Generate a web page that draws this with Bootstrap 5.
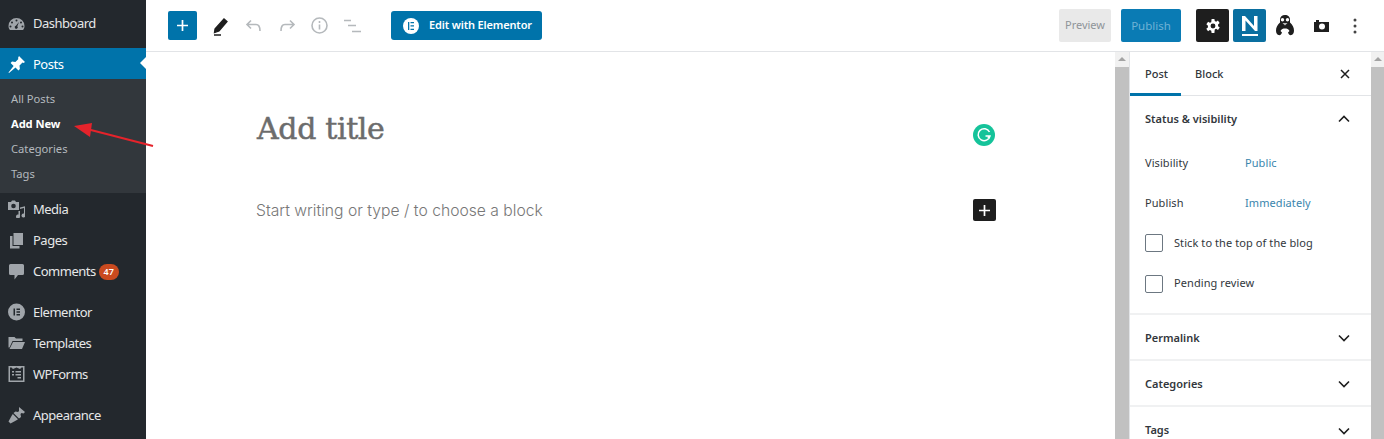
<!doctype html>
<html lang="en"><head><meta charset="utf-8"><title>Add New Post</title>
<link href="https://cdn.jsdelivr.net/npm/bootstrap@5.3.0/dist/css/bootstrap.min.css" rel="stylesheet">
<style>
html,body{height:439px;overflow:hidden;background:#fff}
body{font-family:"Noto Sans","Open Sans",sans-serif;font-size:11px;color:#23282d}
.wp-app{height:439px;position:relative;overflow:hidden}
.wp-side{width:146px;background:#23282d;flex:none;color:#e6e7e8;font-size:13px}
.wp-row{height:31px;padding:2px 0 0 8px;gap:8px;flex:none;letter-spacing:-.5px}
.wp-row svg{width:17px;height:18px;flex:none;fill:#a0a5aa;margin-top:-1px}
.wp-first{height:48px;padding:0 0 0 8px}
.wp-active{background:#0073aa;color:#fff;position:relative}
.wp-active svg{fill:#fff}
.wp-active::after{content:"";position:absolute;right:0;top:9px;border:6px solid transparent;border-right-color:#fff;border-left-width:0;}
.wp-sub{background:#32373c;height:114px;padding:8px 0 0 11px;flex:none;color:#b4b9be;font-size:11.2px}
.wp-sub div{height:25.1px;display:flex;align-items:center}
.wp-sub .wp-cur{color:#fff;font-weight:700;letter-spacing:-.1px}
.wp-gap{height:10px;flex:none}
.wp-badge{background:#ca4a1f;color:#fff;font-size:9px;font-weight:600;border-radius:9px;width:20px;height:16px;margin-left:-5px;line-height:16px;text-align:center;letter-spacing:0}
.wp-top{height:52px;border-bottom:1px solid #e2e4e7;flex:none;padding-left:22px}
.wp-add{width:29px;height:29px;background:#0073aa;border-radius:2px;flex:none}
.wp-tool{fill:none;stroke:#b5b9bc;stroke-width:1.6;flex:none}
.wp-elbtn{background:#0073aa;color:#fff;height:29px;width:151px;border-radius:3px;font-size:11px;font-weight:600;margin-left:30px;padding-left:12px;gap:10px;white-space:nowrap;letter-spacing:-.15px}
.wp-elic{width:16px;height:16px;border-radius:50%;background:#fff;flex:none}
.wp-prev{background:#e9e9e9;color:#8f9499;width:52px;height:33px;border-radius:2px;font-size:11px}
.wp-pub{background:#0a7bb4;color:#6eb2d4;width:60px;height:33px;border-radius:2px;margin-left:10px;font-size:11.500px}
.wp-sq{width:33px;height:33px;border-radius:2px}
.wp-editor{min-width:0;position:relative}
.wp-title{font-family:"DejaVu Serif","Liberation Serif",serif;font-size:30px;letter-spacing:-.35px;color:#6c6c6c;-webkit-text-stroke:.5px #6c6c6c;position:absolute;left:111px;top:57px;line-height:40px;white-space:nowrap}
.wp-ph{font-family:Inter,"Noto Sans",sans-serif;font-weight:300;font-size:15.7px;color:#777;position:absolute;left:110px;top:148px;line-height:22px;white-space:nowrap}
.wp-gram{position:absolute;left:827px;top:72px;width:22px;height:22px;border-radius:50%;background:#15c39a}
.wp-plus{position:absolute;left:827px;top:147px;width:23px;height:22px;border-radius:2px;background:#1e1e1e}
.wp-bar{width:14px;flex:none;background:#f1f1f1;position:relative}
.wp-bar i{display:block;height:15px;position:relative}
.wp-bar i::after{content:"";position:absolute;left:3px;top:5px;border:4px solid transparent;border-bottom-color:#a3a3a3;border-top-width:0}
.wp-thumb{background:#c1c1c1;height:372px}
.wp-panel{width:242px;flex:none;border-left:1px solid #e2e4e7;color:#32373c;overflow:hidden}
.wp-tabs{height:44px;border-bottom:1px solid #e2e4e7;padding:2px 21px 0 15px;font-size:11px;font-weight:500;position:relative;flex:none}
.wp-tabs::before{content:"";position:absolute;left:0;bottom:-1px;width:51px;height:3px;background:#0073aa}
.wp-tabs span+span{margin-left:27px}
.wp-tabs svg{margin-top:-2px}
.wp-sec{padding:2px 21px 0 15px;border-bottom:2px solid #f0f1f2;flex:none;font-weight:600;font-size:11px;height:46px}
.wp-last{border:0;height:32px;padding-top:15px}
.wp-head{height:46px;padding:0 21px 0 15px;font-weight:600;font-size:11px;flex:none}
.wp-chev{width:12px;height:8px;fill:none;stroke:#1e1e1e;stroke-width:1.6}
.wp-body{height:173px;border-bottom:2px solid #f0f1f2;padding:1px 0 0 15px;font-size:11px;flex:none}
.wp-kv{height:40.2px;letter-spacing:.08px}
.wp-kv span{width:100px}
.wp-kv a{color:#3a85ad;text-decoration:none}
.wp-cb{width:18px;height:18px;border:1px solid #6c7781;border-radius:2px;margin-right:11px;flex:none}
.wp-arrow{position:absolute;left:70px;top:120px}
</style></head><body>
<div class="wp-app d-flex">
<aside class="wp-side d-flex flex-column">
 <div class="wp-row wp-first d-flex align-items-center"><svg viewBox="0 0 17 18"><path fill-rule="evenodd" d="M8.500 3A8 8 0 0 0 .5 11c0 1.700.6 3 1.500 4h13c.9-1 1.500-2.300 1.500-4a8 8 0 0 0-8-8zm0 1.500a1 1 0 1 1 0 2 1 1 0 0 1 0-2zM4 6.500a1 1 0 1 1 0 2 1 1 0 0 1 0-2zm9 0a1 1 0 1 1 0 2 1 1 0 0 1 0-2zM2.500 10.500a1 1 0 1 1 0 2 1 1 0 0 1 0-2zm12 0a1 1 0 1 1 0 2 1 1 0 0 1 0-2zM11 7 9.300 11.200a1.500 1.500 0 1 1-1.400-.4z"/></svg>Dashboard</div>
 <div class="wp-row wp-active d-flex align-items-center"><svg viewBox="0 0 17 18"><path d="M11 1l6 6-1.500 1-1-.4-3 3 .4 3.400-1.400 1.400-3-3L1 18l-.5-.5 5.100-6.600-3-3L4 6.500l3.400.4 3-3L10 3z"/></svg>Posts</div>
 <div class="wp-sub"><div>All Posts</div><div class="wp-cur">Add New</div><div>Categories</div><div>Tags</div></div>
 <div class="wp-row d-flex align-items-center"><svg viewBox="0 0 17 18"><path fill-rule="evenodd" d="M0 2h3l1-1.500h3L8 2h3v8H0zm5.500 6.300a2.300 2.300 0 1 0 0-4.600 2.300 2.300 0 0 0 0 4.600zM17.500 6v9.500a2 2 0 1 1-1.500-1.900V8l-4 .9v7.600a2 2 0 1 1-1.500-1.900V11H12V7.500z"/></svg>Media</div>
 <div class="wp-row d-flex align-items-center"><svg viewBox="0 0 17 18"><path d="M5.500 2H15v12H5.500zM2 5h2.500v10h7v2.500H2z"/></svg>Pages</div>
 <div class="wp-row d-flex align-items-center"><svg viewBox="0 0 17 18"><path d="M2.500 2h12A1.500 1.500 0 0 1 16 3.500v8a1.500 1.500 0 0 1-1.500 1.500H10l-3.500 4.500V13h-4A1.500 1.500 0 0 1 1 11.500v-8A1.500 1.500 0 0 1 2.500 2z"/></svg>Comments<span class="wp-badge">47</span></div>
 <div class="wp-gap"></div>
 <div class="wp-row d-flex align-items-center"><svg viewBox="0 0 17 18"><path fill-rule="evenodd" d="M8.500.5a8.500 8.500 0 1 1 0 17 8.500 8.500 0 0 1 0-17zM5.500 5.500v7h1.500v-7zm3 0V7H12V5.500zm0 2.800v1.500H12V8.300zm0 2.800v1.400H12v-1.400z"/></svg>Elementor</div>
 <div class="wp-row d-flex align-items-center"><svg viewBox="0 0 17 18"><path d="M.5 3h6l1.500 1.500h6.500V7H4.500L1.500 13.500H.5zM5 8h12l-3 7H1.500z"/></svg>Templates</div>
 <div class="wp-row d-flex align-items-center"><svg viewBox="0 0 17 18"><path fill-rule="evenodd" d="M.5 1h16v16H.5zM2 2.500v13h13v-13h-1.500L12 4 8.500 2.500 5 4 3.500 2.500zM4 6h2v1.500H4zm3.500 0H13v1.500H7.500zM4 9h2v1.500H4zm3.500 0H13v1.500H7.500zM9.500 12H13v1.500H9.500z"/></svg>WPForms</div>
 <div class="wp-gap"></div>
 <div class="wp-row d-flex align-items-center"><svg viewBox="0 0 17 18"><path d="M11 1l6 5-1.500 1.500-2-.5-1 1 .5 3-2 1.500L5.500 7 7.500 5.500l2.500.5 1-1zM4.800 8l5.200 5.200-2 1.300c-2 1-3.500 2-5.500 3L.5 15.500c1-2 2-3.500 3-5.500z"/></svg>Appearance</div>
</aside>
<main class="flex-grow-1 d-flex flex-column" style="min-width:0">
 <header class="wp-top d-flex align-items-center">
  <div class="wp-add d-flex align-items-center justify-content-center"><svg width="13" height="13" viewBox="0 0 13 13"><path d="M6.500 1v11M1 6.500h11" stroke="#fff" stroke-width="1.700"/></svg></div>
  <svg class="ms-3 flex-none" width="17" height="20" viewBox="0 0 17 20"><path d="M2 13 11 3l3 2.500L6 15l-4.500 1.500zM1 19h7" fill="#1e1e1e" stroke="#1e1e1e" stroke-width="1.300"/></svg>
  <svg class="wp-tool" style="margin-left:15px" width="18" height="14" viewBox="0 0 18 14"><path d="M6 1.500 2 5.500l4 4M2 5.500h9c3 0 4 2 4 6.500"/></svg>
  <svg class="wp-tool" style="margin-left:15px" width="18" height="14" viewBox="0 0 18 14"><path d="M12 1.500l4 4-4 4M16 5.500H7c-3 0-4 2-4 6.500"/></svg>
  <svg class="wp-tool" style="margin-left:15px" width="17" height="17" viewBox="0 0 17 17"><circle cx="8.500" cy="8.500" r="7.500"/><path d="M8.500 7.500v5M8.500 4v2"/></svg>
  <svg class="wp-tool" style="margin-left:16px" width="17" height="14" viewBox="0 0 17 14"><path d="M0 1.500h7M4 6.500h8M8 12.500h9"/></svg>
  <div class="wp-elbtn d-flex align-items-center"><span class="wp-elic d-flex align-items-center justify-content-center"><svg width="8" height="8" viewBox="0 0 8 8"><path d="M1 0h1.300v8H1zM3.500 0H7v1.300H3.500zM3.500 3.300H7v1.300H3.500zM3.500 6.700H7V8H3.500z" fill="#0073aa"/></svg></span>Edit with Elementor</div>
  <div class="ms-auto wp-prev d-flex align-items-center justify-content-center">Preview</div>
  <div class="wp-pub d-flex align-items-center justify-content-center">Publish</div>
  <div class="wp-sq d-flex align-items-center justify-content-center" style="background:#1e1e1e;margin-left:15px"><svg width="14" height="14" viewBox="0 0 20 20"><path fill="#fff" fill-rule="evenodd" d="M8 0h4l.5 3 2 1 2.500-1.700 2.500 3.500-2.300 2 .1 2.400 2.300 2-2.500 3.500-2.600-1.700-2 1L12 20H8l-.5-3.200-2-1-2.600 1.700L.4 14l2.300-2 .1-2.400-2.300-2L3 4l2.500 1.500 2-1zM10 6.500a3.500 3.500 0 1 0 0 7 3.500 3.500 0 0 0 0-7z"/></svg></div>
  <div class="wp-sq d-flex align-items-center justify-content-center" style="background:#0a6fa0;margin-left:4px"><svg width="18" height="22" viewBox="0 0 18 22"><path d="M1 16V1h3l9 10V1h3.500v15H14L4.500 5.500V16zM1 19h16v2H1z" fill="#fff"/></svg></div>
  <svg style="margin-left:10px" width="18" height="21" viewBox="0 0 18 21"><path fill="#1e1e1e" d="M9 0c3 0 5 2 5 4.500v3c2.500 2 4 5 4 8 0 2.500-1 4-2.500 4.500-1.500.5-3-.5-3.500-2.500l1.500-1.500c-1-2-2.500-2.500-4.500-2.500s-3.500.5-4.500 2.500L6 17.500C5.500 19.500 4 20.500 2.500 20 1 19.500 0 18 0 15.500c0-3 1.500-6 4-8v-3C4 2 6 0 9 0z"/><circle cx="6.500" cy="4.800" r="1.700" fill="#fff"/><circle cx="11.500" cy="4.800" r="1.700" fill="#fff"/><path d="M6.500 8h5L9 10.500z" fill="#bbb"/></svg>
  <svg style="margin-left:20px" width="15" height="12" viewBox="0 0 15 12"><path fill="#1e1e1e" fill-rule="evenodd" d="M0 2h2V0h3v2h10v10H0zm8 1.500a3 3 0 1 0 0 6 3 3 0 0 0 0-6z"/></svg>
  <svg style="margin-left:24px;margin-right:27px" width="4" height="16" viewBox="0 0 4 16"><circle cx="2" cy="2" r="1.500" fill="#444"/><circle cx="2" cy="8" r="1.500" fill="#444"/><circle cx="2" cy="14" r="1.500" fill="#444"/></svg>
 </header>
 <div class="d-flex flex-grow-1" style="min-height:0">
  <div class="wp-editor flex-grow-1">
   <div class="wp-title">Add title</div>
   <div class="wp-ph">Start writing or type / to choose a block</div>
   <div class="wp-gram d-flex align-items-center justify-content-center"><svg width="16" height="16" viewBox="0 0 16 16"><path d="M13.500 5A6 6 0 1 0 14 9H9.500M12 11l1.500-2" fill="none" stroke="#fff" stroke-width="1.500"/></svg></div>
   <div class="wp-plus d-flex align-items-center justify-content-center"><svg width="13" height="13" viewBox="0 0 13 13"><path d="M6.500 1v11M1 6.500h11" stroke="#fff" stroke-width="1.700"/></svg></div>
  </div>
  <div class="wp-bar"><i></i><div class="wp-thumb"></div></div>
  <section class="wp-panel d-flex flex-column">
   <div class="wp-tabs d-flex align-items-center"><span>Post</span><span>Block</span><svg class="ms-auto" width="10" height="10" viewBox="0 0 10 10"><path d="M1 1l8 8M9 1l-8 8" stroke="#1e1e1e" stroke-width="1.500"/></svg></div>
   <div class="wp-head d-flex align-items-center justify-content-between"><span>Status &amp; visibility</span><svg class="wp-chev" viewBox="0 0 12 8"><path d="M1 6.500 6 1.500l5 5"/></svg></div>
   <div class="wp-body">
    <div class="wp-kv d-flex align-items-center"><span>Visibility</span><a href="#">Public</a></div>
    <div class="wp-kv d-flex align-items-center"><span>Publish</span><a href="#">Immediately</a></div>
    <div class="wp-kv d-flex align-items-center"><div class="wp-cb"></div>Stick to the top of the blog</div>
    <div class="wp-kv d-flex align-items-center"><div class="wp-cb"></div>Pending review</div>
   </div>
   <div class="wp-sec d-flex align-items-center justify-content-between"><span>Permalink</span><svg class="wp-chev" viewBox="0 0 12 8"><path d="M1 1.500l5 5 5-5"/></svg></div>
   <div class="wp-sec d-flex align-items-center justify-content-between"><span>Categories</span><svg class="wp-chev" viewBox="0 0 12 8"><path d="M1 1.500l5 5 5-5"/></svg></div>
   <div class="wp-sec wp-last d-flex align-items-center justify-content-between"><span>Tags</span><svg class="wp-chev" viewBox="0 0 12 8"><path d="M1 1.500l5 5 5-5"/></svg></div>
  </section>
  <div class="wp-bar" style="width:13px"><i></i><div class="wp-thumb"></div></div>
 </div>
</main>
<svg class="wp-arrow" width="86" height="30" viewBox="0 0 86 30"><path d="M83 26 17 9" stroke="#e5232b" stroke-width="2"/><path d="M4 6 22 3 20 17z" fill="#e5232b"/></svg>
</div>
<script src="https://cdn.jsdelivr.net/npm/bootstrap@5.3.0/dist/js/bootstrap.bundle.min.js"></script>
</body></html>
